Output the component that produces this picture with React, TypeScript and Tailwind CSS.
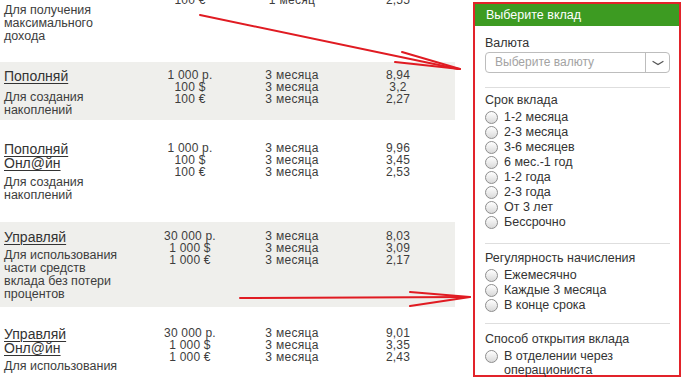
import React from 'react';

interface Deposit {
    name: string[];
    desc: string[];
    amounts: string[];
    terms: string[];
    rates: string[];
    gray: boolean;
    rowClass: string;
    descClass: string;
}

// first row is scrolled off: only its last value line and description show
const deposits: Deposit[] = [
    {
        name: [],
        desc: ['Для получения', 'максимального', 'дохода'],
        amounts: ['100 €'],
        terms: ['1 месяц'],
        rates: ['2,55'],
        gray: false,
        rowClass: 'h-[68px] pt-0',
        descClass: 'mt-[10px]',
    },
    {
        name: ['Пополняй'],
        desc: ['Для создания', 'накоплений'],
        amounts: ['1 000 р.', '100 $', '100 €'],
        terms: ['3 месяца', '3 месяца', '3 месяца'],
        rates: ['8,94', '3,2', '2,27'],
        gray: true,
        rowClass: 'h-[58px] pt-[7px]',
        descClass: 'mt-[8px]',
    },
    {
        name: ['Пополняй', 'Онл@йн'],
        desc: ['Для создания', 'накоплений'],
        amounts: ['1 000 р.', '100 $', '100 €'],
        terms: ['3 месяца', '3 месяца', '3 месяца'],
        rates: ['9,96', '3,45', '2,53'],
        gray: false,
        rowClass: 'h-[102px] pt-[22px]',
        descClass: 'mt-[6px]',
    },
    {
        name: ['Управляй'],
        desc: ['Для использования', 'части средств', 'вклада без потери', 'процентов'],
        amounts: ['30 000 р.', '1 000 $', '1 000 €'],
        terms: ['3 месяца', '3 месяца', '3 месяца'],
        rates: ['8,03', '3,09', '2,17'],
        gray: true,
        rowClass: 'h-[85px] pt-[8px]',
        descClass: 'mt-[5px]',
    },
    {
        name: ['Управляй', 'Онл@йн'],
        desc: ['Для использования'],
        amounts: ['30 000 р.', '1 000 $', '1 000 €'],
        terms: ['3 месяца', '3 месяца', '3 месяца'],
        rates: ['9,01', '3,35', '2,43'],
        gray: false,
        rowClass: 'h-[72px] pt-[20px]',
        descClass: 'mt-[5px]',
    },
];

const terms = ['1-2 месяца', '2-3 месяца', '3-6 месяцев', '6 мес.-1 год', '1-2 года', '2-3 года', 'От 3 лет', 'Бессрочно'];
const periods = ['Ежемесячно', 'Каждые 3 месяца', 'В конце срока'];

const Radio = ({ label }: { label: React.ReactNode }) => (
    <label className="flex items-start gap-[6px] leading-[15px]">
        <span className="mt-[1px] w-[13px] h-[13px] shrink-0 rounded-full border border-[#8d8d8d] bg-linear-to-b from-white to-[#d9d9d9]" />
        <span>{label}</span>
    </label>
);

const DepositRow = ({ d }: { d: Deposit }) => (
    <div className={`grid grid-cols-[146px_80px_124px_88px] items-start pl-[4px] ${d.gray ? 'bg-[#efefec]' : 'bg-white'} ${d.rowClass}`}>
        <div>
            {d.name.map((n, i) => (
                <div key={i} className="text-[14px] leading-[14px] underline underline-offset-2 decoration-1 text-[#333]">{n}</div>
            ))}
            <div className={`text-[12.5px] leading-[13px] text-[#3d3d3d] ${d.descClass}`}>
                {d.desc.map((t, i) => <div key={i}>{t}</div>)}
            </div>
        </div>
        <div className="text-center text-[12px] leading-[12px] tracking-[0.2px] text-[#3d3d3d]">
            {d.amounts.map((t, i) => <div key={i}>{t}</div>)}
        </div>
        <div className="text-center text-[12px] leading-[12px] tracking-[0.3px] text-[#3d3d3d]">
            {d.terms.map((t, i) => <div key={i}>{t}</div>)}
        </div>
        <div className="text-center text-[12px] leading-[12px] tracking-[0.2px] text-[#3d3d3d]">
            {d.rates.map((t, i) => <div key={i}>{t}</div>)}
        </div>
    </div>
);

export default function App() {
    return (
        <div className="relative w-[684px] h-[379px] overflow-hidden bg-white font-['Liberation_Sans',Arial,sans-serif]">
            <div className="flex items-start">
                {/* deposits table */}
                <div className="w-[455px] -mt-[6px]">
                    {deposits.map((d, i) => <DepositRow key={i} d={d} />)}
                </div>

                {/* filter panel */}
                <div className="ml-[18px] mt-[2px] w-[208px] h-[375px] border-2 border-[#e2232a] text-[12.5px] text-[#333]">
                    <div className="h-[22px] bg-[#3d9b22] text-white pl-[11px] leading-[22px]">Выберите вклад</div>
                    <div className="pl-[10px] pr-[9px]">
                        <div className="mt-[10px] leading-[15px]">Валюта</div>
                        <div className="mt-[1px] flex h-[21px] rounded-[4px] border border-[#bdbdbd]">
                            <div className="flex-1 pl-[9px] leading-[19px] text-[12px] text-[#a3a3a3]">Выберите валюту</div>
                            <div className="w-[24px] border-l border-[#bdbdbd] flex items-center justify-center">
                                <svg width="12" height="6" viewBox="0 0 12 6" fill="none">
                                    <path d="M1 1.5 L6 4.5 L11 1.5" stroke="#555" strokeWidth="1.2" strokeLinecap="round" />
                                </svg>
                            </div>
                        </div>
                        <div className="mt-[14px] border-t border-[#dedede]" />

                        <div className="mt-[5px] leading-[15px]">Срок вклада</div>
                        <div className="mt-[2px] flex flex-col">
                            {terms.map(t => <Radio key={t} label={t} />)}
                        </div>
                        <div className="mt-[13px] border-t border-[#dedede]" />

                        <div className="mt-[7px] leading-[15px]">Регулярность начисления</div>
                        <div className="mt-[2px] flex flex-col">
                            {periods.map(t => <Radio key={t} label={t} />)}
                        </div>
                        <div className="mt-[10px] border-t border-[#dedede]" />

                        <div className="mt-[8px] leading-[15px]">Способ открытия вклада</div>
                        <div className="mt-[2px] flex items-start gap-[6px] leading-[14px]">
                            <span className="mt-[1px] w-[13px] h-[13px] shrink-0 rounded-full border border-[#8d8d8d] bg-linear-to-b from-white to-[#d9d9d9]" />
                            <span>В отделении через<br />операциониста</span>
                        </div>
                    </div>
                </div>
            </div>

            {/* red annotation arrows */}
            <svg className="absolute inset-0 pointer-events-none" width="684" height="379" viewBox="0 0 684 379" fill="none">
                <g stroke="#e01b22" strokeWidth="2" strokeLinecap="round">
                    <path d="M200 15 L458 69" />
                    <path d="M402 52 L460 69" />
                    <path d="M395 62 L460 69" />
                    <path d="M240 298 L468 297" />
                    <path d="M410 292 L470 297" />
                    <path d="M410 306 L470 297" />
                </g>
            </svg>
        </div>
    );
}
